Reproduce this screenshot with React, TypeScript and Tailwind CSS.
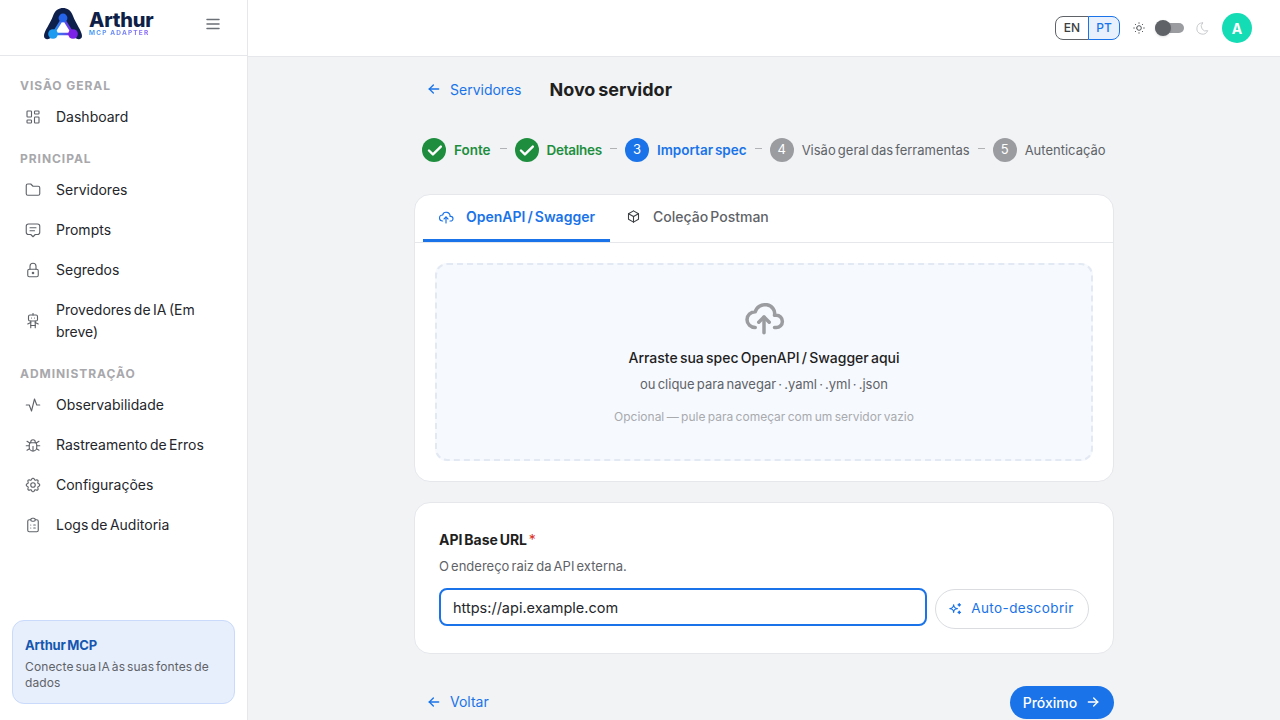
import type { ReactNode } from 'react';
import {
    TbLayoutDashboard, TbFolder, TbMessage2, TbLock, TbRobot, TbActivity, TbBug, TbSettings,
    TbClipboardList, TbMenu2, TbSun, TbMoon, TbArrowLeft, TbArrowRight, TbCheck, TbCloudUpload,
    TbBox, TbSparkles,
} from 'react-icons/tb';

const Logo = () => (
    <svg width="40" height="34" viewBox="0 0 40 34" fill="none">
        <defs>
            <linearGradient id="logoEdge" x1="10" y1="0" x2="30" y2="0" gradientUnits="userSpaceOnUse">
                <stop offset="0" stopColor="#1d9bf0" />
                <stop offset="1" stopColor="#7c22e8" />
            </linearGradient>
        </defs>
        <path d="M1 29C1 24 7 17 10 9C12 3 16 1 20 1C24 1 28 3 30 9C33 17 39 24 39 29C39 33 34 33 31 30C28 27 24 26 20 26C16 26 12 27 9 30C6 33 1 33 1 29Z" fill="#0f1f4b" />
        <path d="M20 11L10 27H30Z" fill="#ffffff" stroke="url(#logoEdge)" strokeWidth="2.4" strokeLinejoin="round" />
        <circle cx="20" cy="11" r="4.4" fill="#2563eb" />
        <circle cx="10" cy="27" r="4.8" fill="#1d9bf0" />
        <circle cx="30" cy="27" r="4.8" fill="#7c22e8" />
    </svg>
);

const SectionLabel = ({ children, className }: { children: ReactNode; className: string }) => (
    <div className={`px-5 pb-0.5 text-[12px] leading-[18px] font-bold tracking-[0.08em] text-[#a8a8ac] [word-spacing:0] ${className}`}>{children}</div>
);

const NavItem = ({ icon, label }: { icon: ReactNode; label: ReactNode }) => (
    <div className="mx-3 flex items-center gap-3.5 px-3 py-[9px] text-[14px] leading-[22px] text-[#24262b]">
        <span className="w-[18px] shrink-0 text-[#5f6368]">{icon}</span>
        <span>{label}</span>
    </div>
);

const Sidebar = () => (
    <aside className="flex h-full w-[248px] shrink-0 flex-col border-r border-[#e5e7eb] bg-white">
        <div className="flex h-[56px] shrink-0 items-center border-b border-[#e5e7eb] pb-[7px] pl-[43px]">
            <Logo />
            <div className="mb-[2px] ml-1.5 flex flex-col">
                <span className="text-[20px] leading-[20px] font-extrabold tracking-[-0.01em] text-[#101f47]">Arthur</span>
                <span className="bg-gradient-to-r from-[#3b9cf5] to-[#8b5cf6] bg-clip-text text-[6.5px] leading-[7px] font-bold tracking-[0.18em] text-transparent [word-spacing:0]">MCP ADAPTER</span>
            </div>
            <TbMenu2 size={18} className="ml-auto mr-[25px] text-[#6b6f76]" />
        </div>
        <SectionLabel className="mt-[21px]">VISÃO GERAL</SectionLabel>
        <NavItem icon={<TbLayoutDashboard size={18} strokeWidth={1.5} />} label="Dashboard" />
        <SectionLabel className="mt-[13px]">PRINCIPAL</SectionLabel>
        <NavItem icon={<TbFolder size={18} strokeWidth={1.5} />} label="Servidores" />
        <NavItem icon={<TbMessage2 size={18} strokeWidth={1.5} />} label="Prompts" />
        <NavItem icon={<TbLock size={18} strokeWidth={1.5} />} label="Segredos" />
        <NavItem icon={<TbRobot size={18} strokeWidth={1.5} />} label="Provedores de IA (Em breve)" />
        <SectionLabel className="mt-[13px]">ADMINISTRAÇÃO</SectionLabel>
        <NavItem icon={<TbActivity size={18} strokeWidth={1.5} />} label="Observabilidade" />
        <NavItem icon={<TbBug size={18} strokeWidth={1.5} />} label="Rastreamento de Erros" />
        <NavItem icon={<TbSettings size={18} strokeWidth={1.5} />} label="Configurações" />
        <NavItem icon={<TbClipboardList size={18} strokeWidth={1.5} />} label="Logs de Auditoria" />
        <div className="mx-3 mb-4 mt-auto rounded-xl border border-[#c9dafb] bg-[#e8effc] px-3 pb-3 pt-[15px]">
            <div className="text-[13px] leading-[18px] font-bold tracking-[-0.01em] text-[#1557b0]">Arthur MCP</div>
            <div className="mt-[5px] text-[12px] leading-4 tracking-[0.01em] text-[#5f6368]">Conecte sua IA às suas fontes de dados</div>
        </div>
    </aside>
);

const Topbar = () => (
    <header className="flex h-[57px] shrink-0 items-center justify-end border-b border-[#e5e7eb] bg-white pr-7">
        <div className="flex h-6 text-[12px] font-medium">
            <span className="flex w-[34px] items-center justify-center rounded-l-lg border border-[#5f6368] text-[#3c4043]">EN</span>
            <span className="-ml-px flex w-[32px] items-center justify-center rounded-r-lg border border-[#1a73e8] bg-[#e8f0fe] text-[#1a73e8]">PT</span>
        </div>
        <TbSun size={14} strokeWidth={1.5} className="ml-[12px] text-[#3c4043]" />
        <div className="relative ml-[9px] h-2.5 w-[29px] rounded-full bg-[#9a9ca0]">
            <div className="absolute -top-[3px] left-0 size-4 rounded-full bg-[#5f6368] shadow" />
        </div>
        <TbMoon size={15} strokeWidth={1.5} className="ml-[11px] text-[#c4c6ca]" />
        <div className="ml-[12px] flex size-[30px] items-center justify-center rounded-full bg-[#14dcb4] text-[14px] font-bold text-white">A</div>
    </header>
);

const Step = ({ mark, label, tone, labelClass = '' }: { mark: ReactNode; label: string; tone: 'done' | 'active' | 'todo'; labelClass?: string }) => {
    const circle = tone === 'done' ? 'bg-[#1e8e3e]' : tone === 'active' ? 'bg-[#1a73e8]' : 'bg-[#9a9ca0]';
    const text = tone === 'done' ? 'text-[13.5px] text-[#1e8e3e] font-semibold' : tone === 'active' ? 'text-[13.5px] text-[#1a73e8] font-semibold' : 'text-[13px] text-[#5f6368]';
    return (
        <div className="flex shrink-0 items-center gap-2">
            <span className={`flex size-6 items-center justify-center rounded-full text-[13px] text-white ${circle}`}>{mark}</span>
            <span className={`whitespace-nowrap leading-6 ${text} ${labelClass}`}>{label}</span>
        </div>
    );
};

const Dash = () => <span className="mx-2 mb-[3px] h-px w-[7px] shrink-0 bg-[#b0b2b6]" />;

export default function App() {
    return (
        <div className="flex h-[720px] w-[1280px] overflow-hidden bg-[#f1f3f5] font-['Inter',sans-serif] [word-spacing:-1.5px]">
            <Sidebar />
            <main className="flex min-w-0 flex-1 flex-col">
                <Topbar />
                <div className="mx-auto flex w-[700px] flex-col">
                    {/* Page title */}
                    <div className="mt-[19px] flex items-center pl-3">
                        <div className="mb-[2px] flex items-center gap-2 text-[14px] text-[#1a73e8]">
                            <TbArrowLeft size={16} />
                            <span>Servidores</span>
                        </div>
                        <h1 className="ml-[28px] text-[18px] leading-7 font-bold text-[#1f1f1f]">Novo servidor</h1>
                    </div>

                    {/* Stepper */}
                    <div className="mt-[34px] flex items-center pl-2">
                        <Step tone="done" label="Fonte" labelClass="pr-px" mark={<TbCheck size={19} strokeWidth={3} />} />
                        <Dash />
                        <Step tone="done" label="Detalhes" labelClass="tracking-[-0.02em]" mark={<TbCheck size={19} strokeWidth={3} />} />
                        <Dash />
                        <Step tone="active" label="Importar spec" mark="3" />
                        <Dash />
                        <Step tone="todo" label="Visão geral das ferramentas" mark="4" />
                        <Dash />
                        <Step tone="todo" label="Autenticação" mark="5" />
                    </div>

                    {/* Import card */}
                    <section className="mt-8 rounded-2xl border border-[#e5e7eb] bg-white">
                        <div className="flex h-[48px] border-b border-[#e5e7eb] px-2 text-[14px] font-semibold">
                            <div className="flex h-[47px] w-[187px] items-center justify-center gap-3 border-b-[3px] border-[#1a73e8] pb-px text-[#1a73e8]">
                                <TbCloudUpload size={16} strokeWidth={1.75} />
                                <span>OpenAPI / Swagger</span>
                            </div>
                            <div className="flex h-[47px] items-center gap-3 px-4 pb-1 font-medium text-[#5f6368]">
                                <TbBox size={15} strokeWidth={1.75} className="text-[#3c4043]" />
                                <span>Coleção Postman</span>
                            </div>
                        </div>
                        <div className="p-5">
                            <div className="flex h-[198px] flex-col items-center rounded-xl border-2 border-dashed border-[#e3e9f2] bg-[#f6f9fe] pt-[31px]">
                                <TbCloudUpload size={42} className="text-[#9a9ca0]" />
                                <div className="mt-[9px] text-[14px] font-medium text-[#1f1f1f]">Arraste sua spec OpenAPI / Swagger aqui</div>
                                <div className="mt-[7px] text-[13px] text-[#5f6368]">ou clique para navegar · .yaml · .yml · .json</div>
                                <div className="mt-[13px] text-[12px] text-[#a8aaae] [word-spacing:-1px]">Opcional — pule para começar com um servidor vazio</div>
                            </div>
                        </div>
                    </section>

                    {/* Base URL card */}
                    <section className="mt-5 rounded-2xl border border-[#e5e7eb] bg-white px-6 pb-6 pt-[27px]">
                        <div className="text-[14px] leading-5 font-bold text-[#1f1f1f]">API Base URL <span className="font-normal text-[#d93025]">*</span></div>
                        <div className="mt-[6px] text-[13px] leading-5 text-[#5f6368]">O endereço raiz da API externa.</div>
                        <div className="mt-[12px] flex items-start gap-2">
                            <div className="flex h-[38px] flex-1 items-center rounded-lg border-2 border-[#1a73e8] px-3 pt-px text-[14.5px] text-[#24262b]">https://api.example.com</div>
                            <div className="mt-px flex h-10 w-[154px] items-center justify-center gap-2 rounded-full border border-[#dadce0] pb-px pr-[2px] text-[13.5px] font-normal tracking-[0.03em] text-[#1a73e8]">
                                <TbSparkles size={15} />
                                <span>Auto-descobrir</span>
                            </div>
                        </div>
                    </section>

                    {/* Footer actions */}
                    <div className="mt-8 flex items-center justify-between pl-3">
                        <div className="mb-[2px] flex items-center gap-2 text-[14px] text-[#1a73e8]">
                            <TbArrowLeft size={16} />
                            <span>Voltar</span>
                        </div>
                        <div className="flex h-[33px] w-[104px] items-center justify-center gap-2 rounded-full bg-[#1a73e8] pb-px text-[14px] font-medium text-white">
                            <span>Próximo</span>
                            <TbArrowRight size={16} />
                        </div>
                    </div>
                </div>
            </main>
        </div>
    );
}
